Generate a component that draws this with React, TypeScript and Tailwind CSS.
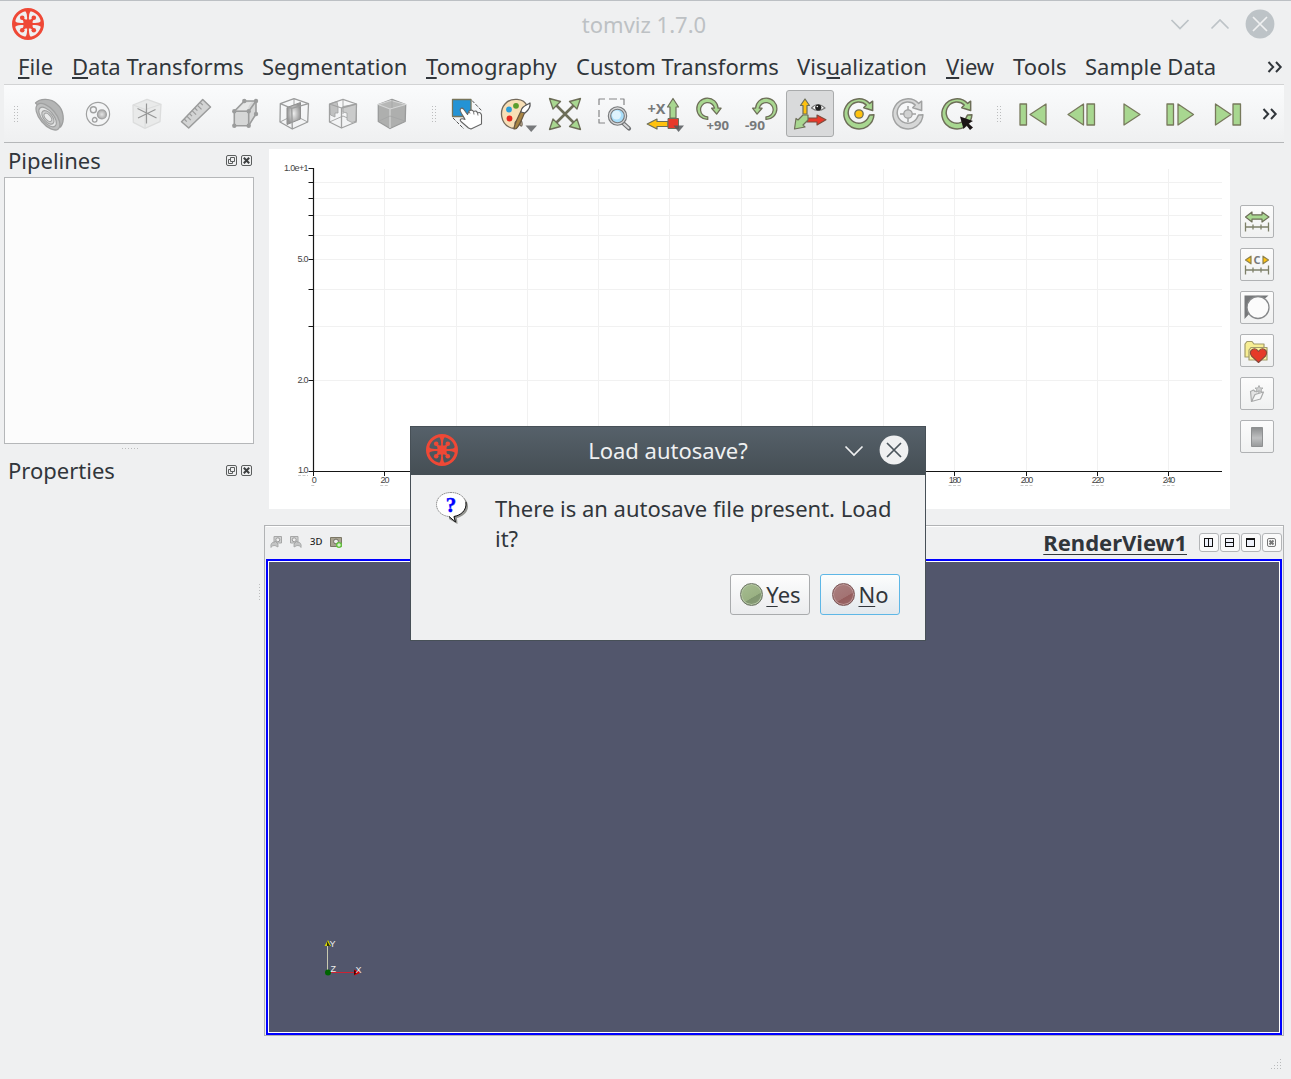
import React from "react";

const G = "#a8d790";
const S = "#6d6e58";
const Y = "#ffc20e";
const R = "#e8392a";

function Icon({ children }: { children: React.ReactNode }) {
  return (
    <svg className="block h-12 w-12 shrink-0" viewBox="-24 -24 48 48" fill="none" strokeLinejoin="round">
      {children}
    </svg>
  );
}

function Logo() {
  return (
    <svg className="block h-8 w-8" viewBox="-16 -16 32 32" fill="none" stroke="#ef4836">
      <circle r="14.500" strokeWidth="3" />
      <path d="M0-15V15M-15 0H15" strokeWidth="1.800" />
      <path d="M-3.500-13.500Q-1-12-1-7H1Q1-12 3.500-13.500ZM-3.500 13.500Q-1 12-1 7H1Q1 12 3.500 13.500ZM-13.500-3.500Q-12-1-7-1V1Q-12 1-13.500 3.500ZM13.500-3.500Q12-1 7-1V1Q12 1 13.500 3.500Z" fill="#ef4836" stroke="none" />
      <path d="M-5.500-5.500L5.500 5.500M-5.500 5.500L5.500-5.500" strokeWidth="2.200" />
      <rect x="-4.600" y="-4.600" width="9.200" height="9.200" rx="1" fill="#ef4836" stroke="none" />
      <g fill="#ef4836" stroke="none">
        <circle cx="-5.800" cy="-6.200" r="2.300" />
        <circle cx="5.800" cy="-6.200" r="2.300" />
        <circle cx="-5.800" cy="6.200" r="2.300" />
        <circle cx="5.800" cy="6.200" r="2.300" />
      </g>
    </svg>
  );
}

const disabledIcons = [
  <Icon key="contour">
    <path d="M-13.500-11C-9-16 2-16 8-10C15-4 16 7 11.500 13Z" fill="#b4b5b5" stroke="#9d9e9e" strokeWidth="1.300" />
    <g stroke="#a0a1a1" transform="rotate(50 -2 1.500)">
      <ellipse cx="-.5" cy="1.500" rx="16" ry="8" fill="#bfc0c0" strokeWidth="1.300" />
      <ellipse cx="-.5" cy="2" rx="11.800" ry="5.800" fill="#e4e5e5" strokeWidth="1.200" />
      <ellipse cx="0" cy="2" rx="8" ry="4.300" fill="#cfd0d0" strokeWidth="1.100" />
      <ellipse cx="0" cy="2" rx="5" ry="2.600" fill="#eaebeb" />
    </g>
  </Icon>,
  <Icon key="spheres">
    <defs>
      <radialGradient id="ball"><stop offset="0" stopColor="#e4e4e4" /><stop offset="1" stopColor="#aaa" /></radialGradient>
    </defs>
    <g stroke="#a0a1a1">
      <circle r="11.600" fill="#f4f5f6" strokeWidth="1.200" />
      <circle cx="-4.600" cy="-4.200" r="3" strokeWidth="1.400" />
      <circle cx="3.900" cy="0.400" r="4.500" fill="url(#ball)" strokeWidth="1.200" />
      <circle cx="-3.300" cy="5.800" r="2.300" strokeWidth="1.300" />
    </g>
  </Icon>,
  <Icon key="axes">
    <path d="M-14-9L0-14.700L14-9.700L13 7.700L-2 14.300L-13.700 8.300Z" fill="#e9eaea" stroke="#dcdddd" strokeWidth="1.300" />
    <path d="M-14-9L-1.500-4.500L14-9.700M-1.500-4.500L-2 14" stroke="#dcdddd" strokeWidth="1.200" />
    <path d="M-.5-10.500V9.500M-9.500-5.500L9.500 4M-9 4L8.500-4.500" stroke="#969797" strokeWidth="1.200" />
  </Icon>,
  <Icon key="ruler">
    <path d="M-14.500 7.700L6.700-14.500L14.500-7L-7.300 14Z" fill="#d3d4d4" stroke="#9b9c9c" strokeWidth="1.500" />
    <path d="M-11.800 5l2.600 2.600M-9.200 2.200l4 4M-6.600-.5l2.600 2.600M-3.900-3.300l4 4M-1.200-6l2.600 2.600M1.500-8.700l4 4M4.200-11.500l2.600 2.600" stroke="#9b9c9c" strokeWidth="1.200" />
  </Icon>,
  <Icon key="crop">
    <path d="M-10.700-2.700L-.7-13H11V0L3.700 11.700H-10.700Z" fill="#d6d7d7" stroke="#9b9c9c" strokeWidth="1.600" />
    <path d="M-10.700-2.700H3.700V11.700M3.700-2.700L11-13" stroke="#9b9c9c" strokeWidth="1.600" />
    <path d="M-7-4Q-2-11 1-11.500L7-12Q3-9 3-4Z" fill="#e5e6e6" />
    <g fill="#9b9c9c">
      <circle cx="-.7" cy="-13" r="2.200" /><circle cx="11" cy="-13" r="2.200" /><circle cx="-10.700" cy="-2.700" r="2.200" />
      <circle cx="3.700" cy="-2.700" r="2.200" /><circle cx="11" cy="0" r="2.200" /><circle cx="-10.700" cy="11.700" r="2.200" /><circle cx="3.700" cy="11.700" r="2.200" />
    </g>
  </Icon>,
  <Icon key="slice">
    <defs>
      <radialGradient id="slice"><stop offset="0" stopColor="#eee" /><stop offset="1" stopColor="#959595" /></radialGradient>
    </defs>
    <g stroke="#9b9c9c" strokeWidth="1.300">
      <path d="M0-15V-4M-14 8L0 1L13.700 8" strokeWidth=".9" />
      <path d="M-7-6.500L6.500-11.500V5L-7 10.500Z" fill="url(#slice)" stroke="#8f8f8f" strokeWidth="1" />
      <path d="M-13.700-10.300L0-15.300L14.500-10.300L13.700 8L-1.700 15L-14 8ZM-13.700-10.300L-2.300-5.700L14.500-10.300M-2.300-5.700L-1.700 15" />
    </g>
  </Icon>,
  <Icon key="clip">
    <g stroke="#a0a1a1" strokeWidth="1.300">
      <path d="M0-14.500V0M-13.500 8L0 2L13.500 8" strokeWidth=".9" />
      <path d="M-13.500-10L-6-12.500L-5-7V-1H-8V3L-12.500 1Z" fill="#c0c1c1" strokeWidth=".8" />
      <path d="M0-7.500L13.500-10V7L9 8.500L4 6V-1L0-2Z" fill="#cacbcb" strokeWidth=".8" />
      <path d="M-13.500-10L0-14.700L13.500-10L13 8L-1.500 14L-13.500 8ZM-13.500-10L-1.500-6L13.500-10M-1.500-6V14" />
    </g>
  </Icon>,
  <Icon key="volume">
    <path d="M-13.700-9.500L0-14.700L13.700-9.500L13.200 7.500L-2 14.500L-13.700 7.500Z" fill="#aeafae" stroke="#9a9b9b" strokeWidth="1.300" />
    <path d="M-13.700-9.500L-1-13.500L13.700-9.500L-2-5Z" fill="#b6b7b6" stroke="#d4d5d5" strokeWidth="1.100" />
    <path d="M-2-5L-2 14" stroke="#d2d3d3" strokeWidth="1.300" />
    <path d="M0-14V-6M-13 7L-2 2L13 7" stroke="#a3a4a4" strokeWidth=".8" />
  </Icon>,
];

function Rotate90({ flip }: { flip?: boolean }) {
  return (
    <Icon>
      <g transform={flip ? "translate(3.500 1.500) scale(-.97 .97)" : "translate(-2.800 1.500) scale(.97)"}>
        <path d="M-1.500 4V1.300A7.300 7.300 0 1 1 5.500-7.500H2.500L7.700-1.500L12.300-7.500H9.200A11 11 0 1 0-1.500 4Z" fill={G} stroke={S} strokeWidth="1.300" />
      </g>
      <text x={flip ? -16 : -5.5} y="16" fontSize="13" fontWeight="bold" fontFamily="Noto Sans, sans-serif" fill="#77797a" textLength={flip ? 20 : 22.5} lengthAdjust="spacingAndGlyphs">{flip ? "-90" : "+90"}</text>
    </Icon>
  );
}

function Refresh({ disabled }: { disabled?: boolean }) {
  return (
    <path d="M10 2.500A10.700 10.700 0 1 1 7.500-9L5-6.300L14-3.500V-13L11-10.700A15.200 15.200 0 1 0 15.300 .8L11 1Z" transform="translate(-.2 0) scale(.99)" fill={disabled ? "#d6d7d7" : G} stroke={disabled ? "#a1a2a2" : S} strokeWidth="1.500" />
  );
}

const colorIcons = [
  <Icon key="interact">
    <path d="M-14.500-14.500H4V2.500H-14.500Z" fill="#2493d5" stroke="#77745a" strokeWidth="1.300" />
    <path d="M5-13.500L15-3M-14 4L-3 15" stroke="#555" strokeDasharray="3.500 1.500" />
    <path d="M-6.800-4.500C-7.500-2.500-3.500 2-2 5.500C-5.500 4-8 5-6 7.500L1.500 14L4 15L14.500 10V1Q13.500-2.500 10.500-1Q9.500-4 6.500-2.500Q5-5 2-3L.5 .5L-3.500-5Q-5.500-7-6.800-4.500Z" fill="#fff" stroke="#666" strokeWidth="1.100" />
    <path d="M2.200-2.500L3-.5M6.500-2.500L7 .5M10.500-1L11 1.500" stroke="#777" />
  </Icon>,
  <Icon key="palette">
    <path d="M11-8C8-16-5-17-11-10C-17-3-15 9-7 13C-1 16 1 13-1 9C0 5 5 7 4 11C6 14 7 10 5 6" fill="#f8dfb6" stroke="#73695b" strokeWidth="1.300" />
    <circle cx="-7" cy="-4.500" r="2.900" fill="#2aa0dc" />
    <circle cx="0" cy="-8.200" r="2.900" fill="#5b9e2d" />
    <circle cx="-6.500" cy="4.500" r="2.900" fill="#e8281f" />
    <path d="M-1 15C2 15 4 9 9-2L5-3C2 4-2 10-2 15Z" fill="#a98543" stroke="#665640" strokeWidth="1.200" />
    <path d="M5-2C5-7 9-8 14-11Q15-6 9-1Z" fill="#fff" stroke="#555" strokeWidth="1.200" />
    <path d="M9.500 11.500H21L15.200 18Z" fill="#77797b" />
  </Icon>,
  <Icon key="reset">
    <path d="M-10-10L10 10M10-10L-10 10" stroke={S} strokeWidth="2.600" />
    <path d="M-15.500-15.500L-4.500-12.500L-12-5ZM15.500-15.500L4.500-12.500L12-5ZM-15.500 15.500L-4.500 12.500L-12 5ZM15.500 15.500L4.500 12.500L12 5Z" fill={G} stroke={S} strokeWidth="1.300" />
  </Icon>,
  <Icon key="zoombox">
    <path d="M-15-9V-15H-9M-5-15H3M6-15H10V-9M-15-4V3M-15 5V9H-9" stroke="#858687" strokeWidth="1.200" />
    <path d="M9 9L15 14.500" stroke="#6f7173" strokeWidth="4.200" strokeLinecap="round" />
    <path d="M10 10L14.500 14" stroke="#d5d6d7" strokeWidth="2" strokeLinecap="round" />
    <circle cx="3.500" cy="2" r="8" fill="#a9defa" stroke="#77797b" strokeWidth="3.500" />
    <circle cx="3.500" cy="2" r="8" stroke="#d5d6d7" strokeWidth="1.300" />
    <circle cx="2.500" cy="1" r="4.500" fill="#def3fd" />
  </Icon>,
  <Icon key="plusx">
    <text x="-15.500" y="-.5" fontSize="15" fontWeight="bold" fontFamily="Noto Sans, sans-serif" fill="#77797a" textLength="18" lengthAdjust="spacingAndGlyphs">+X</text>
    <path d="M7 4V-7H4.500L10-15.500L15.500-7H13V4Z" fill={G} stroke={S} strokeWidth="1.200" />
    <path d="M5 7.500H-6V5L-15.800 10L-6 15V12.500H5Z" fill={Y} stroke={S} strokeWidth="1.200" />
    <path d="M5 4.500H15.500V14.500H5Z" fill={R} stroke={S} />
    <path d="M10.500 11.500H21L15.500 18Z" fill="#55585c" opacity=".85" />
  </Icon>,
  <Rotate90 key="cw" />,
  <Rotate90 key="ccw" flip />,
  <div key="axes" className="flex h-[47px] w-12 items-center justify-center rounded-[3px] border border-[#a9abac] bg-[#d9dadb]">
    <Icon>
      <path d="M-7 0V-8.500H-9.500L-5-15L-.5-8.500H-3V0Z" fill={Y} stroke={S} strokeWidth="1.200" />
      <path d="M-3 4H7V1L16 5.800L7 11V8H-3Z" fill={R} stroke="#7d4c3d" strokeWidth="1.100" />
      <path d="M-7 1L-12 6L-14 4.500L-15.500 15L-5 13L-7 11L-2 6V1Z" fill={G} stroke={S} strokeWidth="1.200" />
      <path d="M1.500-6Q8-13 15-6Q8-1 1.500-6Z" fill="#fff" stroke="#777" strokeWidth="1.200" />
      <circle cx="8.300" cy="-6.500" r="3.100" fill="#202020" /><circle cx="7.300" cy="-7.500" r=".8" fill="#fff" />
    </Icon>
  </div>,
  <Icon key="center"><Refresh /><circle r="4.200" fill={Y} stroke={S} strokeWidth="1.300" /></Icon>,
  <Icon key="center2">
    <Refresh disabled />
    <path d="M0-8V8M-8 0H8" stroke="#a1a2a2" strokeWidth="1.500" />
    <circle r="4.200" fill="#d0d1d1" stroke="#a1a2a2" strokeWidth="1.300" />
  </Icon>,
  <Icon key="pick"><Refresh /><path d="M3 2.500L16 7L11.500 9.500L16 13.500L13 16L9.500 11.500L6.500 15Z" fill="#1b1516" /></Icon>,
];

const play = (d: string) => <Icon key={d}><path d={d} fill={G} stroke="#77795c" strokeWidth="1.300" /></Icon>;
const playIcons = [
  play("M-13-10H-6.500V11H-13ZM13-10V11L-3 .5Z"),
  play("M-14 .5L1.500-10V11ZM5-10H12.500V11H5Z"),
  play("M-7-10L9 .5L-7 11Z"),
  play("M-13-10H-6.500V11H-13ZM-2-10L13.500 .5L-2 11Z"),
  play("M-13.500-10L2 .5L-13.500 11ZM4-10H11.500V11H4Z"),
];

function Grip({ w, h }: { w: number; h: number }) {
  return (
    <svg width={w} height={h} className="block shrink-0">
      <defs>
        <pattern id="grip" width="3" height="3" patternUnits="userSpaceOnUse"><rect width="1" height="1" fill="#bcbdbe" /></pattern>
      </defs>
      <rect width={w} height={h} fill="url(#grip)" />
    </svg>
  );
}

function More() {
  return (
    <svg className="block h-4 w-4" viewBox="0 0 16 16" fill="none" stroke="#31363b" strokeWidth="2"><path d="M1.500 3L6.200 8L1.500 13M9 3L13.700 8L9 13" /></svg>
  );
}

const menu: [string, string, string, string][] = [
  ["", "F", "ile", "w-[54px]"],
  ["", "D", "ata Transforms", "w-[190px]"],
  ["Segmentation", "", "", "w-[164px]"],
  ["", "T", "omography", "w-[150px]"],
  ["Custom Transforms", "", "", "w-[221px]"],
  ["Vis", "u", "alization", "w-[149px]"],
  ["", "V", "iew", "w-[67px]"],
  ["Tools", "", "", "w-[72px]"],
  ["Sample Data", "", "", "w-[182px]"],
];

function DockTitle({ title }: { title: string }) {
  return (
    <div className="flex h-[33px] items-center pl-1 pr-[1px] pt-[1px]">
      <span className="flex-1 pb-[2px]">{title}</span>
      <svg className="block h-3 w-[27px]" viewBox="0 0 27 12" fill="none" stroke="#5b5e5e">
        <rect x=".5" y=".5" width="10" height="10" rx="1.500" />
        <path d="M4.500 2.500H8.500V6.500H4.500ZM6.500 6.500V8.500H2.500V4.500H4.500" />
        <rect x="15.500" y=".5" width="10" height="10" rx="1.500" />
        <path d="M17.800 2.800L23.200 8.200M23.200 2.800L17.800 8.200" stroke="#3c3f40" strokeWidth="2" />
      </svg>
    </div>
  );
}

function Chart() {
  const xs = Array.from({ length: 13 }, (_, i) => i * 20);
  const px = (v: number) => Math.round(44.12 + v * 3.562) + 0.5;
  const py = (v: number) => Math.round(321.7 - 302.5 * Math.log10(v)) + 0.5;
  return (
    <svg className="block h-[360px] w-[961px] bg-white" viewBox="0 0 961 360" fontFamily="Liberation Sans, Arial, sans-serif" fontSize="9" fill="#444">
      <g stroke="#f1f1f1" strokeWidth="1">
        {xs.slice(1).map((v) => <path key={v} d={`M${px(v)} 20V321`} />)}
        {[2, 3, 4, 5, 6, 7, 8, 9].map((v) => <path key={v} d={`M45 ${py(v)}H953`} />)}
      </g>
      <g stroke="#151515">
        <path d="M44.500 19V323M44 322.500H953" strokeWidth="1.200" />
        {xs.map((v) => <path key={v} d={`M${px(v)} 322V327`} />)}
        {[1, 2, 3, 4, 5, 6, 7, 8, 9, 10].map((v) => <path key={v} d={`M39.500 ${v === 10 ? 19.5 : v === 1 ? 322.5 : py(v)}H44.500`} />)}
      </g>
      <text x="15" y="22" textLength="24.500">1.0e+1</text>
      <text x="28.500" y="113" textLength="11">5.0</text>
      <text x="28.500" y="234" textLength="11">2.0</text>
      <text x="29" y="324" textLength="10.500">1.0</text>
      {xs.map((v) => {
        const w = v === 0 ? 4.5 : v < 100 ? 9 : 12.5;
        return <text key={v} x={px(v) + 0.5 - w / 2} y="334" textLength={w}>{v}</text>;
      })}
      <g stroke="#cacaca" strokeDasharray="3 1.500">
        <path d="M29 326.500H39" />
        {xs.map((v) => { const w = v === 0 ? 4.5 : v < 100 ? 8.5 : 12; return <path key={v} d={`M${px(v) - w / 2} 336.500h${w}`} />; })}
      </g>
    </svg>
  );
}

const scaleBar = <path d="M-12 10.500H12M-11.500 6V15M-4 8V13M4 8V13M11.500 6V15" stroke="#7e8069" strokeWidth="1.300" />;
const sideIcons = [
  <><path d="M-11.500-5L-5-10V-7.200H5V-10L12-5L5 0V-2.800H-5V0Z" fill={G} stroke={S} strokeWidth="1.200" /><g transform="translate(0 -5.500)">{scaleBar}</g></>,
  <><path d="M-11.500-5L-6-8.800V-1.200ZM11.500-5L6-8.800V-1.200Z" fill={Y} stroke="#8f824b" strokeWidth="1.200" /><text x="-3.500" y="-1" fontSize="11" fontWeight="bold" fontFamily="Noto Sans, sans-serif" fill="#77797a">C</text><g transform="translate(0 -5.500)">{scaleBar}</g></>,
  <><path d="M-12.500-12.500H11.500L5-7L-7 5L-12.500 11Z" fill="#76787a" /><circle cx="1" cy="-.5" r="11" fill="#fbfbfb" stroke="#86888a" strokeWidth="1.300" /></>,
  <><path d="M-12 6V-7L-10-9.500H-5L-3-7H7V6Z" fill="#f7ee93" stroke="#a29b6b" strokeWidth="1.200" /><path d="M-8 9V-1L-6-3.500H10V9Z" fill="#fbf49e" stroke="#a29b6b" strokeWidth="1.200" /><path d="M1.500 11.500L-5.500 5C-9-1-2-5 1.500 .5C5-5 12-1 8.500 5Z" fill="#e63a28" stroke="#87493c" strokeWidth="1.100" /></>,
  <><path d="M-5.500 7.500L-6.500-2.500L-3.500-4L-2-2.500L2-3.500V-1" fill="#e4e4e4" stroke="#a9aaaa" strokeWidth="1.200" /><path d="M-5.500 7.500L-2 .5L6.500-2L3.500 5Z" fill="#f6f6f6" stroke="#a9aaaa" strokeWidth="1.200" /><path d="M2-8.500L3.200-6L6-6L4-4.200L5-2L2-3.200L-1-2L0-4.200L-2-6L.8-6Z" fill="#cfd0d0" stroke="#a9aaaa" strokeWidth=".9" /></>,
  <><defs><linearGradient id="bar" x2="0" y2="1"><stop stopColor="#8b8d8e" /><stop offset=".55" stopColor="#bfc0c1" /><stop offset="1" stopColor="#97999a" /></linearGradient></defs><path d="M-5.500-9.500H5.500V9.500H-5.500Z" fill="url(#bar)" stroke="#8e9091" strokeWidth="1" /></>,
];

function ViewButton({ d, close }: { d: string; close?: boolean }) {
  return (
    <div className="flex h-[19px] w-5 items-center justify-center rounded-[3px] border border-[#b3b5b7] bg-[#fafafa]">
      <svg className="-ml-[1px] block h-[11px] w-[11px]" viewBox="0 0 11 11" fill="none" stroke={close ? "#777" : "#111"} shapeRendering={close ? "auto" : "crispEdges"}>
        <rect x="1.500" y="1.500" width="8" height="8" rx={close ? 1.5 : 0} strokeWidth="1" fill={close ? "none" : "#eef1fa"} />
        <path d={d} strokeWidth={close ? 2 : 1} />
      </svg>
    </div>
  );
}

function Camera({ add, flip }: { add?: boolean; flip?: boolean }) {
  return (
    <svg className="block h-3 w-3" viewBox="0 0 12 12" fill="none">
      <g transform={flip ? "translate(12 0) scale(-1 1)" : undefined}>
        <path d={add ? "M.5 1.500H11.500V10.500H.5Z" : "M4 .5H11.500V7H4Z"} fill={add ? "#a8a391" : "#d0d1d1"} stroke={add ? "#7b7765" : "#a6a7a7"} />
        <circle cx={add ? 6 : 7.8} cy={add ? 5.5 : 3.8} r={add ? 2.4 : 2} fill="#eee" stroke={add ? "#6f6c5e" : "#999"} />
        {add
          ? <><circle cx="9" cy="9" r="3" fill="#62c43b" /><path d="M9 7.200V10.800M7.200 9H10.800" stroke="#fff" /></>
          : <path d="M8 8V11L5 9.500Q2 9 1 11.500Q0 6 5 6V5Z" fill="#c3c4c4" stroke="#a0a1a1" strokeWidth=".8" />}
      </g>
    </svg>
  );
}

function Dialog() {
  return (
    <div className="absolute left-[410px] top-[425px] flex h-[215px] w-[516px] flex-col border border-[#475057] bg-[#eff0f1]">
      <div className="flex h-12 shrink-0 items-center bg-gradient-to-b from-[#56616a] to-[#454e54] pb-[2px] pl-[15px] pr-4 text-[#eff0f1]">
        <Logo />
        <span className="flex-1 pb-[1px] pl-[35px] text-center">Load autosave?</span>
        <svg className="block h-8 w-[66px]" viewBox="0 0 66 32" fill="none" stroke="#eff0f1" strokeWidth="1.700">
          <path d="M2.500 12.500L11 21L19.500 12.500" />
          <circle cx="51" cy="16" r="14.400" fill="#eff0f1" stroke="none" />
          <path d="M44 9L58 23M58 9L44 23" stroke="#4b555c" />
        </svg>
      </div>
      <div className="flex pl-6 pt-4">
        <svg className="block h-9 w-9" viewBox="0 0 36 36">
          <path d="M17 3.500C28 3.500 33 9.500 33 15.500C33 21 28 25.500 22 27L22.500 33L14 28" fill="#92938f" />
          <path d="M16 1.500C7 1.500 1.500 7 1.500 13.500C1.500 20 7 25 14 25.500L20 31L19 25.500C26 24.500 31 20 31 13.500C31 7 25 1.500 16 1.500Z" fill="#fff" stroke="#777" strokeWidth=".8" strokeDasharray="1.500 .5" />
          <path d="M31 11C32 20 25 24.500 19 25.500L20.500 31L14 25.500" fill="none" stroke="#111" />
          <text x="16" y="20.500" textAnchor="middle" fontSize="21" fontWeight="bold" fontFamily="Liberation Serif, serif" fill="#00f" stroke="#00f" strokeWidth=".4">?</text>
        </svg>
        <p className="ml-6 w-[420px] pb-[1px] pt-[2px] leading-[30px]">There is an autosave file present. Load<br />it?</p>
      </div>
      <div className="mt-5 flex gap-2.5 pl-[319px]">
        <div className="flex h-[41px] w-20 items-center justify-center gap-[3px] rounded-[3px] border border-[#a9abad] bg-gradient-to-b from-[#fdfdfd] to-[#ebecee] pl-[1px]">
          <span className="h-[23px] w-[23px] rounded-full border border-[#6d7665] bg-[linear-gradient(150deg,#a6bd91_0%,#9ab183_60%,#80966f_62%,#8a9d79_100%)] shadow-[inset_0_0_0_1px_#b6c7a6]" />
          <span className="pb-[2px]"><span className="underline decoration-1 underline-offset-[3px]">Y</span>es</span>
        </div>
        <div className="flex h-[41px] w-20 items-center justify-center gap-[3px] rounded-[3px] border border-[#5eb7e6] bg-gradient-to-b from-[#fcfdfd] to-[#e3e9ed] pl-[1px]">
          <span className="h-[23px] w-[23px] rounded-full border border-[#7c5656] bg-[linear-gradient(150deg,#aa8080_0%,#a37373_60%,#955d5d_62%,#9b6868_100%)] shadow-[inset_0_0_0_1px_#bd9999]" />
          <span className="pb-[2px]"><span className="underline decoration-1 underline-offset-[3px]">N</span>o</span>
        </div>
      </div>
    </div>
  );
}

export default function App() {
  return (
    <div className="relative flex h-[1079px] w-[1291px] flex-col overflow-hidden border-t border-[#bcc0c4] bg-[#eff0f1] font-['Noto_Sans',sans-serif] text-[22px] leading-[30px] text-[#31363b]">
      <header className="flex h-[46px] shrink-0 items-center pl-3 pr-4">
        <Logo />
        <span className="flex-1 pl-[75px] text-center text-[#bdc1c4]">tomviz 1.7.0</span>
        <svg className="block h-8 w-[106px]" viewBox="0 0 106 32" fill="none" stroke="#bdc3c7" strokeWidth="1.700">
          <path d="M2.500 12L11 20.500L19.500 12M42.500 20.500L51 12L59.500 20.500" />
          <circle cx="91" cy="16" r="14.400" fill="#bdc3c7" stroke="none" />
          <path d="M84 9L98 23M98 9L84 23" stroke="#eff0f1" />
        </svg>
      </header>

      <nav className="flex h-[37px] shrink-0 items-center pl-[18px] pt-[3px]">
        {menu.map(([a, k, b, w]) => (
          <span key={a + k + b} className={`${w} shrink-0 whitespace-nowrap pb-[2px]`}>
            {a}{k && <span className="underline decoration-2 underline-offset-[2px]">{k}</span>}{b}
          </span>
        ))}
        <More />
      </nav>

      <div className="ml-1 mr-[7px] flex h-[59px] shrink-0 items-center border-y border-b-[#b5b7b9] border-t-[#d2d3d4] bg-gradient-to-b from-[#fafbfc] to-[#eff0f1]">
        <div className="w-5 pl-2.5"><Grip w={6} h={16} /></div>
        {disabledIcons.map((n, i) => <div key={i} className="flex w-[49px] justify-center">{n}</div>)}
        <div className="flex w-[26px] pl-4"><Grip w={6} h={16} /></div>
        {colorIcons.map((n, i) => <div key={i} className="flex w-[49px] justify-center">{n}</div>)}
        <div className="flex w-[27px] pl-4"><Grip w={6} h={16} /></div>
        {playIcons.map((n, i) => <div key={i} className="flex w-[49px] justify-center">{n}</div>)}
        <div className="pl-[9px]"><More /></div>
      </div>

      <main className="flex min-h-0 flex-1">
        <aside className="ml-1 w-[250px] shrink-0 pt-[1px]">
          <DockTitle title="Pipelines" />
          <div className="h-[267px] border border-[#b5b7b9] bg-[#fcfcfc]" />
          <div className="flex h-[10px] items-start pl-[118px] pt-1"><Grip w={17} h={1} /></div>
          <DockTitle title="Properties" />
        </aside>
        <div className="w-2.5 shrink-0 pl-[5px] pt-[441px]"><Grip w={2} h={17} /></div>
        <section className="w-[1020px] shrink-0">
          <div className="flex pl-[5px] pt-1.5">
            <Chart />
            <div className="ml-2.5 flex flex-col gap-2.5 pt-14">
              {sideIcons.map((n, i) => (
                <div key={i} className="flex h-[33px] w-[34px] items-center justify-center overflow-hidden rounded-[2px] border border-[#b0b2b4] bg-gradient-to-b from-[#fcfcfc] to-[#f0f1f1]"><Icon>{n}</Icon></div>
              ))}
            </div>
          </div>
          <div className="mt-4 h-[511px] w-[1020px] border border-[#b1b3b5] pl-[1px]">
            <div className="flex h-[33px] items-center border-t border-white pb-[2px] pl-1 pr-[1px]">
              <Camera />
              <div className="ml-2"><Camera flip /></div>
              <span className="ml-[8px] w-5 text-[9.500px] font-medium leading-3 text-[#222]">3D</span>
              <Camera add />
              <span className="ml-auto mr-3 pb-[1px] font-bold underline decoration-1 underline-offset-[3px]">RenderView1</span>
              <div className="flex gap-[1px]">
                <ViewButton d="M5.500 1V10" />
                <ViewButton d="M1 5.500H10" />
                <ViewButton d="M1 2.500H10" />
                <ViewButton d="M3.500 3.500L7.500 7.500M7.500 3.500L3.500 7.500" close />
              </div>
            </div>
            <div className="h-[476px] w-[1016px] border-2 border-[#0000ff]">
              <div className="h-full border border-white bg-[#52566c] pl-[51px] pt-[372px]">
                <svg className="block h-12 w-14" viewBox="320 934 56 48" fontFamily="Liberation Sans, sans-serif" fontSize="9" fill="#eee">
                  <path d="M327.500 972V944" stroke="#c9c9b0" />
                  <path d="M324.500 946L328 940L331 946Z" fill="#d4d400" /><path d="M327 941V946H330Z" fill="#333300" />
                  <path d="M330 972.500H356" stroke="#c23" /><path d="M354 969.500V975.500L361 972.500Z" fill="#e00000" /><path d="M354 970V975L357 972.500Z" fill="#400" />
                  <circle cx="328" cy="972.500" r="3" fill="#006400" />
                  <text x="329.500" y="946.500">Y</text><text x="330.500" y="972">Z</text><text x="355.500" y="973">X</text>
                </svg>
              </div>
            </div>
          </div>
        </section>
      </main>
      <div className="absolute bottom-2 right-2"><svg className="h-3 w-3" viewBox="0 0 12 12" fill="#b9bbbc"><path d="M9 0h1v1H9zM6 3h1v1H6zM9 3h1v1H9zM3 6h1v1H3zM6 6h1v1H6zM9 6h1v1H9zM0 9h1v1H0zM3 9h1v1H3zM6 9h1v1H6zM9 9h1v1H9z" /></svg></div>
      <Dialog />
    </div>
  );
}
